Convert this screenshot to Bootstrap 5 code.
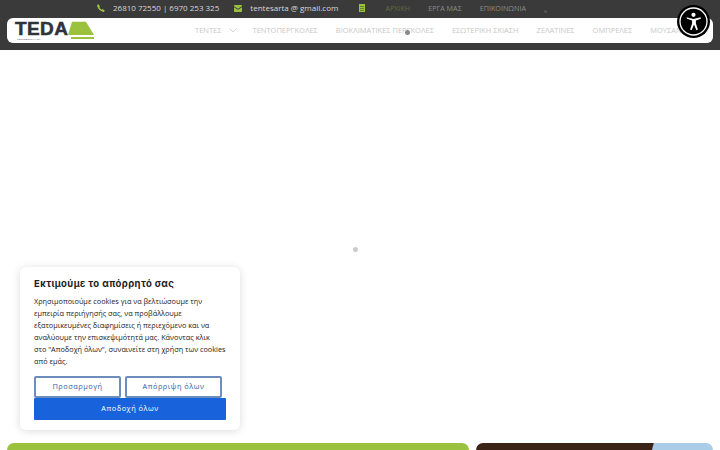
<!DOCTYPE html>
<html lang="el">

<head>
    <meta charset="UTF-8">
    <meta name="viewport" content="width=device-width, initial-scale=1.0">
    <title>TEDA</title>
    <link href="https://cdn.jsdelivr.net/npm/bootstrap@5.3.0/dist/css/bootstrap.min.css" rel="stylesheet">
    <style>
        html,
        body {
            height: 450px;
            overflow: hidden;
            font-family: "Open Sans", "Noto Sans", sans-serif;
            background-color: #fff;
        }

        .site-head {
            background-color: #3a3a3a;
            height: 50px;
            padding: 0 7px;
        }

        .top-row {
            height: 18px;
            padding-left: 90px;
            padding-bottom: 2px;
            font-size: 8px;
            color: #d8d8d8;
            white-space: nowrap;
        }

        .top-row svg {
            display: block;
        }

        .top-mail {
            margin-left: 15px;
        }

        .top-book {
            margin-left: 21px;
            margin-right: 20px;
        }

        .top-menu {
            font-size: 7.2px;
            color: #8b8b8b;
            gap: 18px;
        }

        .top-active {
            color: #5f6b3c;
        }

        .top-dot {
            width: 3px;
            height: 3px;
            margin-top: 7px;
            border-radius: 50%;
            background-color: #555;
        }

        .main-bar {
            height: 25px;
            background-color: #fff;
            border-radius: 6px;
            padding-left: 7px;
            overflow: hidden;
            white-space: nowrap;
        }

        .logo-box {
            width: 181px;
            flex: none;
        }

        .main-menu {
            font-size: 7.5px;
            color: #c8c8c8;
            gap: 18px;
        }

        .menu-caret {
            margin-left: -11px;
            margin-right: -2px;
        }

        .hero-blank {
            height: 393px;
            position: relative;
        }

        .load-dot {
            position: absolute;
            left: 353px;
            top: 197px;
            width: 5px;
            height: 5px;
            border-radius: 50%;
            background-color: #c8ccd0;
        }

        .menu-dot {
            position: absolute;
            left: 405px;
            top: 30px;
            width: 5px;
            height: 5px;
            border-radius: 50%;
            background-color: #8a8a8a;
        }

        .tile-row {
            padding: 0 7px;
            gap: 7px;
        }

        .tile-green {
            width: 462px;
            height: 60px;
            background-color: #9bc23f;
            border-radius: 7px 7px 0 0;
        }

        .tile-photo {
            width: 237px;
            height: 60px;
            border-radius: 7px 7px 0 0;
            background: linear-gradient(105deg, #3b2317 0 70%, #a9cde6 70.5%);
        }

        .cookie-box {
            position: absolute;
            left: 20px;
            top: 267px;
            width: 220px;
            height: 163px;
            padding: 11px 14px;
            background-color: #fff;
            border-radius: 6px;
            box-shadow: 0 1px 8px rgba(0, 0, 0, .14);
        }

        .cookie-title {
            font-family: Inter, "Open Sans", sans-serif;
            font-size: 9.5px;
            font-weight: 700;
            letter-spacing: .4px;
            color: #212121;
            line-height: 11px;
            margin: 0 0 6px;
        }

        .cookie-text {
            font-size: 7.3px;
            line-height: 12px;
            color: #212121;
            margin: 0 0 9px;
            white-space: nowrap;
        }

        .cookie-btns {
            width: 192px;
        }

        .btn-outline-cookie {
            height: 22px;
            padding: 0;
            font-size: 7.4px;
            letter-spacing: .5px;
            color: #2f62ad;
            background-color: #fff;
            border: 2px solid #6d8dbd;
            border-radius: 2px;
        }

        .btn-outline-cookie.first-one {
            width: 87px;
        }

        .btn-outline-cookie.second-one {
            width: 97px;
        }

        .btn-accept {
            display: block;
            width: 192px;
            height: 22px;
            padding: 0;
            font-size: 7.4px;
            letter-spacing: .5px;
            color: #fff;
            background-color: #1863dc;
            border: 0;
            border-radius: 1px;
        }

        .a11y-btn {
            position: absolute;
            left: 677px;
            top: 5px;
            width: 33px;
            height: 33px;
            border: 0;
            padding: 0;
            border-radius: 50%;
            background-color: #000;
        }
    </style>
</head>

<body class="position-relative">
    <header class="site-head">
        <div class="top-row d-flex align-items-center">
            <svg class="me-2" width="8" height="8" viewBox="0 0 16 16" fill="#9bc23f">
                <path d="M3 .5 6 4.8 4.7 6.6c.9 2 2.500 3.700 4.700 4.700L11.200 10l4.300 3-1 2c-.4.700-1.200 1-2 .8C6.500 14.500 1.500 9.500.2 3.500-.1 2.700.3 1.900 1 1.500Z" />
            </svg>
            <span>26810 72550 | 6970 253 325</span>
            <svg class="top-mail me-2" width="8" height="7" viewBox="0 0 16 14" fill="#9bc23f">
                <path d="M0 2.500V1.500C0 .7.700 0 1.500 0h13c.8 0 1.500.7 1.500 1.500v1L8 7.500ZM0 4.500V12.500c0 .8.700 1.500 1.500 1.500h13c.8 0 1.500-.7 1.500-1.500V4.500L8 9.500Z" />
            </svg>
            <span>tentesarta @ gmail.com</span>
            <svg class="top-book" width="6" height="8" viewBox="0 0 6 8" fill="#9bc23f">
                <path d="M0 0h6v8H0Z" />
                <path d="M1 2h4v.6H1ZM1 4h4v.6H1ZM1 6h4v.6H1Z" fill="#3a3a3a" />
            </svg>
            <div class="top-menu d-flex align-items-center">
                <span class="top-active">ΑΡΧΙΚΗ</span>
                <span>ΕΡΓΑ ΜΑΣ</span>
                <span>ΕΠΙΚΟΙΝΩΝΙΑ</span>
                <span class="top-dot"></span>
            </div>
        </div>
        <nav class="main-bar d-flex align-items-center">
            <div class="logo-box">
                <svg width="82" height="19" viewBox="0 0 82 19" class="d-block" overflow="visible">
                    <text x="1" y="14" font-family="Liberation Sans, sans-serif" font-weight="700" font-size="19" letter-spacing=".4" fill="#2e3438" stroke="#2e3438" stroke-width=".5">TEDA</text>
                    <path d="M58 .8H72L80 14H54Z" fill="#9bc23f" />
                    <path d="M57 16h23v2H57Z" fill="#9bc23f" />
                    <text x="3" y="18.500" font-family="Liberation Sans, sans-serif" font-size="2.500" fill="#555">ΤΕΝΤΟΒΙΟΜΗΧΑΝΙΑ</text>
                </svg>
            </div>
            <div class="main-menu d-flex align-items-center">
                <span>ΤΕΝΤΕΣ</span>
                <svg class="menu-caret" width="8" height="5" viewBox="0 0 8 5" fill="none" stroke="#c8c8c8" stroke-width=".8">
                    <path d="M.5.5 4 4 7.500.5" />
                </svg>
                <span>ΤΕΝΤΟΠΕΡΓΚΟΛΕΣ</span>
                <span>ΒΙΟΚΛΙΜΑΤΙΚΕΣ ΠΕΡΓΚΟΛΕΣ</span>
                <span>ΕΣΩΤΕΡΙΚΗ ΣΚΙΑΣΗ</span>
                <span>ΖΕΛΑΤΙΝΕΣ</span>
                <span>ΟΜΠΡΕΛΕΣ</span>
                <span>ΜΟΥΣΑΝΤΕΣ</span>
            </div>
        </nav>
    </header>

    <main>
        <div class="hero-blank">
            <span class="load-dot"></span>
        </div>
        <div class="tile-row d-flex">
            <div class="tile-green"></div>
            <div class="tile-photo"></div>
        </div>
    </main>

    <span class="menu-dot"></span>

    <div class="cookie-box">
        <p class="cookie-title">Εκτιμούμε το απόρρητό σας</p>
        <p class="cookie-text">Χρησιμοποιούμε cookies για να βελτιώσουμε την<br>εμπειρία περιήγησής σας, να προβάλλουμε<br>εξατομικευμένες διαφημίσεις ή περιεχόμενο και να<br>αναλύουμε την επισκεψιμότητά μας. Κάνοντας κλικ<br>στο "Αποδοχή όλων", συναινείτε στη χρήση των cookies<br>από εμάς.</p>
        <div class="cookie-btns">
            <div class="d-flex gap-1">
                <button type="button" class="btn btn-outline-cookie first-one">Προσαρμογή</button>
                <button type="button" class="btn btn-outline-cookie second-one">Απόρριψη όλων</button>
            </div>
            <button type="button" class="btn btn-accept">Αποδοχή όλων</button>
        </div>
    </div>

    <button type="button" class="a11y-btn" aria-label="Προσβασιμότητα">
        <svg width="33" height="33" viewBox="0 0 33 33" class="d-block">
            <circle cx="16.500" cy="16.500" r="13.500" fill="none" stroke="#fff" stroke-width="1.300" />
            <circle cx="16.500" cy="9.800" r="2.100" fill="#fff" />
            <path d="M9.500 12.300 16.500 14l7-1.700.4 1.400-5 1.700v3.200l2 6-1.500.6-2.400-5.600-2.400 5.600-1.500-.6 2-6v-3.200l-5-1.700Z" fill="#fff" />
        </svg>
    </button>

    <script src="https://cdn.jsdelivr.net/npm/bootstrap@5.3.0/dist/js/bootstrap.bundle.min.js"></script>
</body>

</html>
